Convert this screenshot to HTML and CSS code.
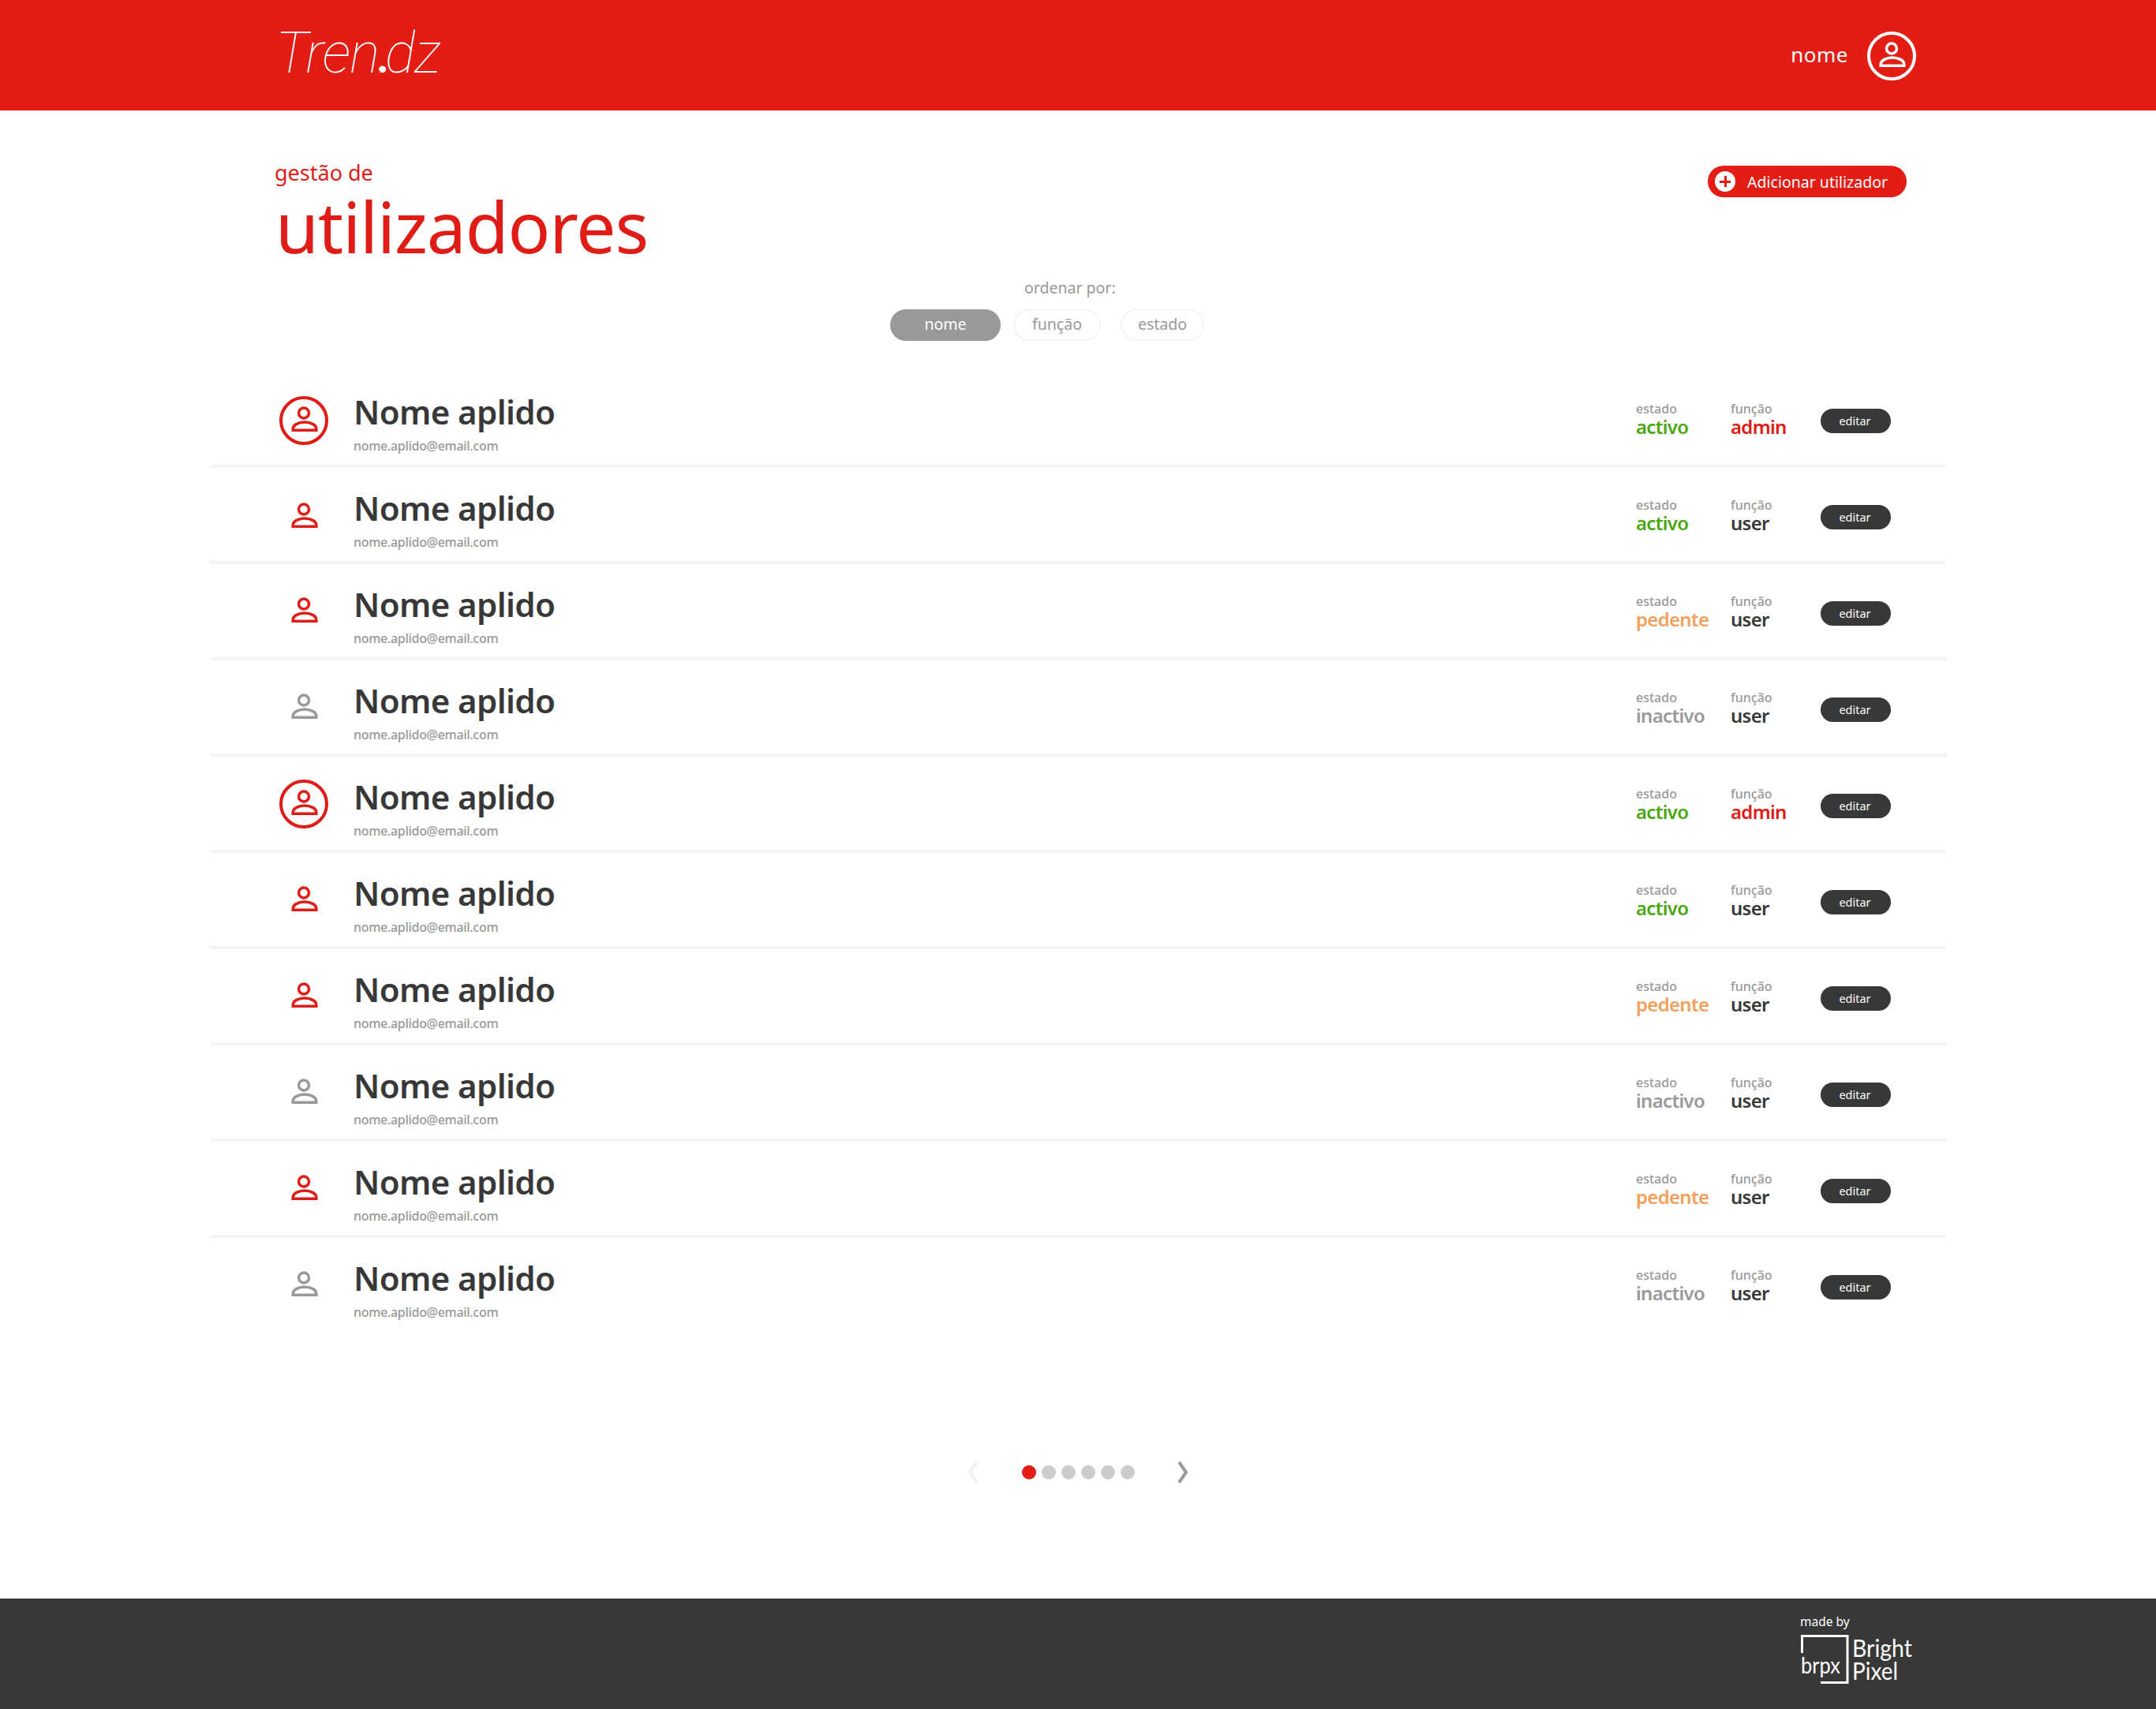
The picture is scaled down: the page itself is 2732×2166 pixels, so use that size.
FILE: index.html
```html
<!DOCTYPE html>
<html lang="pt">
<head>
    <meta charset="UTF-8">
    <title>Tren.dz - gestão de utilizadores</title>
    <link rel="stylesheet" href="styles.css">
</head>
<body>
    <svg class="defs" width="0" height="0">
        <symbol id="user" viewBox="0 0 62 62">
            <circle cx="31" cy="21.5" r="6.5" fill="none" stroke="currentColor" stroke-width="3.5"/>
            <path d="M17.2 43.3H46.8V41.5C46.8 36.5 39.5 33 32 33S17.2 36.5 17.2 41.5Z" fill="none" stroke="currentColor" stroke-width="3.5"/>
        </symbol>
        <symbol id="ring" viewBox="0 0 62 62">
            <circle cx="31" cy="31" r="29" fill="none" stroke="currentColor" stroke-width="4"/>
            <use href="#user" width="62" height="62"/>
        </symbol>
    </svg>

    <div class="header">
        <div class="logo">Tren<span class="logo-dot">.</span>dz</div>
        <div class="account">
            <span class="account-name">nome</span>
            <svg class="icon"><use href="#ring"/></svg>
        </div>
    </div>

    <div class="container">
        <div class="title-row">
            <div>
                <p class="subtitle">gestão de</p>
                <h1>utilizadores</h1>
            </div>
            <a href="#" class="add-button">
                <span class="plus"></span>
                Adicionar utilizador
            </a>
        </div>

        <div class="sort">
            <p>ordenar por:</p>
            <div class="sort-pills">
                <a href="#" class="pill active">nome</a>
                <a href="#" class="pill funcao">função</a>
                <a href="#" class="pill estado">estado</a>
            </div>
        </div>

        <div class="list">
            <div class="row">
                <svg class="icon red"><use href="#ring"/></svg>
                <div class="person"><h2>Nome aplido</h2><p>nome.aplido@email.com</p></div>
                <div class="col col-state"><span>estado</span><strong class="green">activo</strong></div>
                <div class="col col-role"><span>função</span><strong class="red">admin</strong></div>
                <a href="#" class="edit">editar</a>
            </div>
            <div class="row">
                <svg class="icon red"><use href="#user"/></svg>
                <div class="person"><h2>Nome aplido</h2><p>nome.aplido@email.com</p></div>
                <div class="col col-state"><span>estado</span><strong class="green">activo</strong></div>
                <div class="col col-role"><span>função</span><strong>user</strong></div>
                <a href="#" class="edit">editar</a>
            </div>
            <div class="row raised">
                <svg class="icon red"><use href="#user"/></svg>
                <div class="person"><h2>Nome aplido</h2><p>nome.aplido@email.com</p></div>
                <div class="col col-state"><span>estado</span><strong class="orange">pedente</strong></div>
                <div class="col col-role"><span>função</span><strong>user</strong></div>
                <a href="#" class="edit">editar</a>
            </div>
            <div class="row raised">
                <svg class="icon grey"><use href="#user"/></svg>
                <div class="person"><h2>Nome aplido</h2><p>nome.aplido@email.com</p></div>
                <div class="col col-state"><span>estado</span><strong class="grey">inactivo</strong></div>
                <div class="col col-role"><span>função</span><strong>user</strong></div>
                <a href="#" class="edit">editar</a>
            </div>
            <div class="row raised">
                <svg class="icon red"><use href="#ring"/></svg>
                <div class="person"><h2>Nome aplido</h2><p>nome.aplido@email.com</p></div>
                <div class="col col-state"><span>estado</span><strong class="green">activo</strong></div>
                <div class="col col-role"><span>função</span><strong class="red">admin</strong></div>
                <a href="#" class="edit">editar</a>
            </div>
            <div class="row raised">
                <svg class="icon red"><use href="#user"/></svg>
                <div class="person"><h2>Nome aplido</h2><p>nome.aplido@email.com</p></div>
                <div class="col col-state"><span>estado</span><strong class="green">activo</strong></div>
                <div class="col col-role"><span>função</span><strong>user</strong></div>
                <a href="#" class="edit">editar</a>
            </div>
            <div class="row raised">
                <svg class="icon red"><use href="#user"/></svg>
                <div class="person"><h2>Nome aplido</h2><p>nome.aplido@email.com</p></div>
                <div class="col col-state"><span>estado</span><strong class="orange">pedente</strong></div>
                <div class="col col-role"><span>função</span><strong>user</strong></div>
                <a href="#" class="edit">editar</a>
            </div>
            <div class="row raised">
                <svg class="icon grey"><use href="#user"/></svg>
                <div class="person"><h2>Nome aplido</h2><p>nome.aplido@email.com</p></div>
                <div class="col col-state"><span>estado</span><strong class="grey">inactivo</strong></div>
                <div class="col col-role"><span>função</span><strong>user</strong></div>
                <a href="#" class="edit">editar</a>
            </div>
            <div class="row raised">
                <svg class="icon red"><use href="#user"/></svg>
                <div class="person"><h2>Nome aplido</h2><p>nome.aplido@email.com</p></div>
                <div class="col col-state"><span>estado</span><strong class="orange">pedente</strong></div>
                <div class="col col-role"><span>função</span><strong>user</strong></div>
                <a href="#" class="edit">editar</a>
            </div>
            <div class="row raised">
                <svg class="icon grey"><use href="#user"/></svg>
                <div class="person"><h2>Nome aplido</h2><p>nome.aplido@email.com</p></div>
                <div class="col col-state"><span>estado</span><strong class="grey">inactivo</strong></div>
                <div class="col col-role"><span>função</span><strong>user</strong></div>
                <a href="#" class="edit">editar</a>
            </div>
        </div>

        <div class="pager">
            <svg class="chevron prev" viewBox="0 0 12 28"><polyline points="11,1 2,14 11,27"/></svg>
            <span class="dot current"></span>
            <span class="dot"></span>
            <span class="dot"></span>
            <span class="dot"></span>
            <span class="dot"></span>
            <span class="dot"></span>
            <svg class="chevron next" viewBox="0 0 12 28"><polyline points="1,1 10,14 1,27"/></svg>
        </div>
    </div>

    <div class="footer">
        <div class="made-by">
            <p>made by</p>
            <svg class="brpx" width="150" height="66" viewBox="0 0 150 66">
                <path d="M60 2.500H2.500V24M26 61.500H60V1" fill="none" stroke="#fff" stroke-width="3"/>
                <text x="1" y="50" class="brpx-small" textLength="50" lengthAdjust="spacingAndGlyphs">brpx</text>
                <text x="66" y="29" class="brpx-big" textLength="76" lengthAdjust="spacingAndGlyphs">Bright</text>
                <text x="66" y="58" class="brpx-big" textLength="58" lengthAdjust="spacingAndGlyphs">Pixel</text>
            </svg>
        </div>
    </div>
</body>
</html>
```

FILE: styles.css
```css
html, body {
    height: 100%;
}
body {
    font-family: "Noto Sans", "Open Sans", sans-serif;
    margin: 0;
    display: flex;
    flex-direction: column;
    background: #fff;
    color: #383838;
}
p, h1, h2 {
    margin: 0;
    font-weight: 400;
}
a {
    text-decoration: none;
}
.defs {
    position: absolute;
}
.icon {
    display: block;
    width: 62px;
    height: 62px;
    flex: none;
}
.red {
    color: #e01c16;
}
.grey {
    color: #999;
}
.green {
    color: #4aa70f;
}
.orange {
    color: #f3a05c;
}

/* Header */
.header {
    height: 140px;
    flex: none;
    display: flex;
    justify-content: space-between;
    align-items: center;
    padding: 0 304px 0 349px;
    background: #e31c14;
    color: #fff;
}
.logo {
    font-family: Roboto, sans-serif;
    font-size: 72px;
    font-weight: 100;
    font-style: italic;
    letter-spacing: -1px;
    line-height: 144px;
}
.logo-dot {
    font-family: Lato, sans-serif;
    font-weight: 900;
    font-style: normal;
    font-size: 54px;
    margin: 0 -2px;
}
.account {
    display: flex;
    align-items: center;
    gap: 24px;
    font-size: 26px;
    letter-spacing: 0.5px;
}
.account-name {
    margin-bottom: 2px;
}
.account .icon {
    margin-top: 2px;
}

/* Title */
.container {
    width: 2200px;
    margin-left: 267px;
    flex: 1;
}
.title-row {
    display: flex;
    justify-content: space-between;
    align-items: flex-start;
    padding: 63px 51px 0 81px;
}
.subtitle {
    color: #e01c16;
    font-size: 27px;
    line-height: 32px;
}
h1 {
    color: #e01c16;
    font-size: 89px;
    line-height: 100px;
    margin: 2px 0 0 1px;
    letter-spacing: -1px;
}
.add-button {
    display: flex;
    align-items: center;
    gap: 15px;
    height: 40px;
    margin-top: 7px;
    padding: 0 24px 0 9px;
    border-radius: 20px;
    background: #e31c14;
    color: #fff;
    font-size: 19.500px;
}
.plus {
    width: 26px;
    height: 26px;
    border-radius: 50%;
    background: #fff;
    position: relative;
}
.plus::before, .plus::after {
    content: "";
    position: absolute;
    background: #e31c14;
    left: 6px;
    right: 6px;
    top: 11.500px;
    height: 3px;
}
.plus::after {
    left: 11.500px;
    right: 11.500px;
    top: 6px;
    bottom: 6px;
    height: auto;
    width: 3px;
}

/* Sort */
.sort {
    margin: 13px 0 0 861px;
    color: #999;
    font-size: 19.500px;
}
.sort p {
    margin-left: 170px;
    line-height: 30px;
}
.sort-pills {
    display: flex;
    margin-top: 12px;
}
.pill {
    box-sizing: border-box;
    height: 40px;
    line-height: 34px;
    text-align: center;
    border: 2px solid #f4f4f4;
    border-radius: 20px;
    color: #999;
}
.pill.active {
    width: 140px;
    background: #999;
    border-color: #999;
    color: #fff;
}
.pill.funcao {
    width: 111px;
    margin-left: 16px;
}
.pill.estado {
    width: 106px;
    margin-left: 25px;
}

/* Users */
.list {
    margin-top: 39px;
}
.row {
    display: flex;
    align-items: center;
    box-sizing: border-box;
    height: 122px;
    padding: 0 71px 0 87px;
    border-bottom: 4px solid #f4f4f4;
}
.row:last-child {
    border-bottom-color: transparent;
}
.row .icon {
    margin-top: 6px;
}
.row.raised .icon {
    margin-top: 2px;
}
.person {
    flex: 1;
    margin: 12px 0 0 32px;
}
.person h2 {
    font-size: 42px;
    font-weight: 600;
    line-height: 52px;
    letter-spacing: -0.6px;
}
.person p {
    margin-top: 5px;
    font-size: 16px;
    font-weight: 500;
    line-height: 24px;
    letter-spacing: -0.3px;
    color: #999;
}
.col {
    display: flex;
    flex-direction: column;
    font-size: 16px;
    line-height: 20px;
    margin-top: 1px;
}
.col span {
    color: #999;
    font-weight: 500;
}
.col strong {
    font-size: 24px;
    font-weight: 600;
    line-height: 25px;
    letter-spacing: -0.7px;
}
.col-state {
    width: 120px;
}
.col-role {
    width: 114px;
}
.edit {
    width: 89px;
    height: 31px;
    line-height: 30px;
    margin-top: 6px;
    padding-right: 2px;
    box-sizing: border-box;
    text-align: center;
    border-radius: 16px;
    background: #383838;
    color: #fff;
    font-size: 14.500px;
}

/* Pager */
.pager {
    display: flex;
    justify-content: center;
    align-items: center;
    gap: 7px;
    margin-top: 161px;
    padding-right: 2px;
}
.chevron {
    width: 12px;
    height: 28px;
    fill: none;
    stroke-width: 4px;
}
.chevron.prev {
    stroke: #f0f0f0;
    margin-right: 49px;
}
.chevron.next {
    stroke: #999;
    margin-left: 48px;
}
.dot {
    width: 18px;
    height: 18px;
    border-radius: 50%;
    background: #ccc;
}
.dot.current {
    background: #e31c14;
}

/* Footer */
.footer {
    height: 140px;
    flex: none;
    box-sizing: border-box;
    padding: 18px 0 0 2281px;
    background: #383838;
    color: #fff;
}
.made-by p {
    font-size: 15.500px;
    line-height: 22px;
}
.brpx {
    display: block;
    margin-top: 5px;
    overflow: visible;
}
.brpx-small {
    font-family: Lato, sans-serif;
    font-size: 28px;
    fill: #fff;
}
.brpx-big {
    font-family: Lato, sans-serif;
    font-size: 31px;
    fill: #fff;
}
```
